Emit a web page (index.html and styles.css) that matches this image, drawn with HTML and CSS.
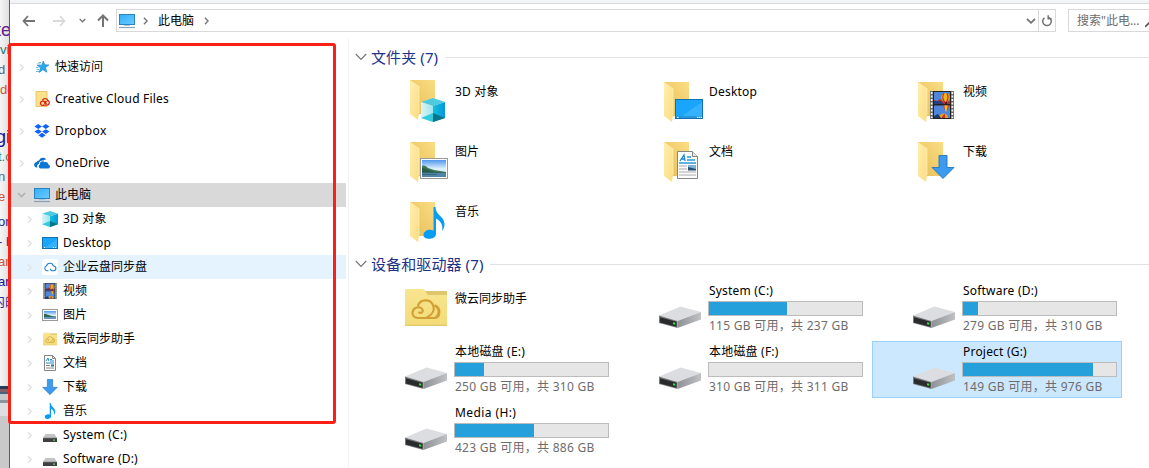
FILE: index.html
```html
<!DOCTYPE html>
<html lang="zh-CN">
<head>
<meta charset="utf-8">
<title>此电脑</title>
<link rel="stylesheet" href="styles.css">
</head>
<body>
<svg class="defs" width="0" height="0" aria-hidden="true">
  <defs>
    <linearGradient id="gFront" x1="0" y1="0" x2="1" y2="1"><stop offset="0" stop-color="#ffefad"/><stop offset="1" stop-color="#fbdc84"/></linearGradient>
    <linearGradient id="gBack" x1="0" y1="1" x2="1" y2="0"><stop offset="0" stop-color="#e5bd56"/><stop offset="1" stop-color="#fbdd84"/></linearGradient>
    <linearGradient id="gScreen" x1="0" y1="0" x2="1" y2="1"><stop offset="0" stop-color="#34aefc"/><stop offset="1" stop-color="#6bcaff"/></linearGradient>
    <linearGradient id="gDesk" x1="0" y1="0" x2="1" y2="1"><stop offset="0" stop-color="#1aa5fd"/><stop offset=".55" stop-color="#1aa5fd"/><stop offset=".56" stop-color="#35b2ff"/><stop offset="1" stop-color="#35b2ff"/></linearGradient>
    <linearGradient id="gCubeL" x1="0" y1="0" x2="1" y2="0"><stop offset="0" stop-color="#dcf5f7"/><stop offset="1" stop-color="#9ee4ee"/></linearGradient>
    <linearGradient id="gCubeR" x1="0" y1="0" x2="1" y2="0"><stop offset="0" stop-color="#12c0d8"/><stop offset="1" stop-color="#0596e0"/></linearGradient>
    <linearGradient id="gSky" x1="0" y1="0" x2="0" y2="1"><stop offset="0" stop-color="#4f97ee"/><stop offset=".5" stop-color="#dbeefb"/></linearGradient>
    <linearGradient id="gSide" x1="0" y1="0" x2="1" y2="0"><stop offset="0" stop-color="#8f9295"/><stop offset="1" stop-color="#bfc1c4"/></linearGradient>
    <linearGradient id="gWy" x1="0" y1="0" x2="0" y2="1"><stop offset="0" stop-color="#f8e58f"/><stop offset="1" stop-color="#f3db78"/></linearGradient>
  </defs>

  <symbol id="chev" viewBox="0 0 6 10"><path d="M1 1l4 4-4 4" fill="none" stroke="currentColor" stroke-width="1.7"/></symbol>
  <symbol id="down" viewBox="0 0 10 6"><path d="M1 .8l4 4 4-4" fill="none" stroke="currentColor" stroke-width="1.8"/></symbol>
  <symbol id="wide" viewBox="0 0 12 8"><path d="M.8 1l5.2 5.4L11.200 1" fill="none" stroke="currentColor" stroke-width="1.200"/></symbol>

  <symbol id="pc" viewBox="0 0 16 16"><rect x=".5" y="1.500" width="15" height="10" fill="url(#gScreen)" stroke="#2a83bd"/><path d="M5 12.500h6" stroke="#a7c8dd"/><path d="M0 14.500h16" stroke="#89a4b8" stroke-width="1.200"/></symbol>

  <symbol id="star" viewBox="0 0 16 16"><path d="M9.300 2l1.500 3.800 4 .1-3.200 2.700 1.200 4.600-3.900-2.500-3.700 2.700 1.300-4.600L3.300 6.500l4.400-.3z" fill="#2ca8e8" stroke="#1683c4" stroke-width=".6"/><path d="M4.500 3.500H7M3 5h3.500M2 8.500h2.500M2.500 10.500h2.500M2 12.500h3" stroke="#49a8dc" stroke-width=".8"/></symbol>

  <symbol id="cc" viewBox="0 0 16 16"><path d="M2 .5h11v15H2z" fill="#fce28a" stroke="#e7bd55" stroke-width=".8"/><path d="M10.500 13.700c-1 1.200-4 1-4-1.400 0-2.500 3-2.800 4.200-1.300l1.600 2M8.500 9.300c1-2.400 5-2 5.200.2 2.400.6 2 4.600-.8 4.600H9.500M11 12.500c-1-1.200.5-2.500 1.600-1.600" fill="none" stroke="#dc231b" stroke-width="1.350"/></symbol>

  <symbol id="dropbox" viewBox="0 0 16 16"><path d="M4.200 1l3.700 2.400-3.700 2.500L.5 3.400zM11.800 1l3.700 2.400-3.700 2.500-3.700-2.500zM4.200 6.200l3.700 2.400-3.700 2.500L.5 8.600zM11.800 6.200l3.700 2.400-3.700 2.500-3.700-2.500zM8 9.800l3.600 2.400L8 14.700l-3.600-2.500z" fill="#0d63fb"/></symbol>

  <symbol id="onedrive" viewBox="0 0 16 16"><path d="M3.500 12.500H2.700C-.6 12.200-.6 7.700 2.300 7.200A3 3 0 0 1 5 5.400a4.300 4.300 0 0 1 7.500-.9 3.600 3.600 0 0 0-3.300 1.200C6.800 5.200 5 7 4.800 8.900c-1.600.3-2.100 1.800-1.300 3.600z" fill="#0a6fc9"/><path d="M6.600 13.500a2.200 2.200 0 0 1-.8-4.100c0-3 3.100-4.300 4.900-2.100 1.800-.8 3.600.3 3.600 2.200 2.300.3 2.200 3.900 0 4z" fill="#0a78d4"/></symbol>

  <symbol id="cube" viewBox="0 0 24 24"><path d="M0 4l12-4 12 4-12 4z" fill="#4ccbe0"/><path d="M0 4l12 4v16L0 20z" fill="url(#gCubeL)"/><path d="M24 4L12 8v16l12-4z" fill="url(#gCubeR)"/><path d="M0 20l12-5v9z" fill="#34cbdc"/><path d="M12 15l12 5-12 4z" fill="#07758a"/></symbol>

  <symbol id="desk" viewBox="0 0 28 20"><rect x=".5" y=".5" width="27" height="19" fill="url(#gDesk)" stroke="#1170b3"/><path d="M1 18h26" stroke="#1580c5"/><path d="M2 18.300h1.500M22 18.300h1.300M24 18.300h1.300M26 18.300h1" stroke="#fff" stroke-width="1.200"/></symbol>
  <symbol id="desk-sm" viewBox="0 0 16 16"><rect x=".5" y="2.500" width="15" height="11" fill="url(#gDesk)" stroke="#1170b3"/><path d="M2 12.500h1M11 12.500h1M13 12.500h1" stroke="#fff"/></symbol>

  <symbol id="sync" viewBox="0 0 16 16"><rect width="16" height="16" rx="2" fill="#fff"/><path d="M6.500 11.800H5a2.600 2.600 0 0 1-.5-5A3.600 3.600 0 0 1 11.400 7a2.400 2.400 0 0 1 .2 4.800H9.500M8 10l1.800 1.800" fill="none" stroke="#1b80d5" stroke-width="1.100"/></symbol>

  <symbol id="film" viewBox="0 0 24 28"><path d="M0 0h24v28H0z" fill="#6b6b6b"/><path d="M1.700 1v26M22.300 1v26" stroke="#f4f4f4" stroke-width="1.700" stroke-dasharray="2 1.500"/><path d="M3 0h18v28H3z" fill="#222"/><path d="M4 1h16v12H4zM4 14.500h16V27H4z" fill="#4e86de"/><path d="M4 9l3 1 3-2 4 3 6-1v3H4z" fill="#b5322c"/><path d="M4 10h7l3 3H4z" fill="#2c3d7d"/><ellipse cx="15.500" cy="6.500" rx="4.200" ry="4.500" fill="#f0b41e"/><path d="M14 2.200c-2 3-1.500 7 1 9M17 2.200c1.500 3 1.200 7-.8 9" fill="none" stroke="#c93227" stroke-width="1.300"/><path d="M15 11h2v2h-2z" fill="#422"/><path d="M12.500 14.500h7l-2 4.500h-2.500z" fill="#d9442c"/><path d="M14.500 14.500h3l-1 6h-1z" fill="#f3c222"/><path d="M9 27c0-6 9-6 9 0z" fill="#e8a11d"/><path d="M12 27c0-3 3-4 3-4v4z" fill="#c2342a"/><path d="M4 25l4-2 3 4H4z" fill="#20386e"/></symbol>

  <symbol id="pic" viewBox="0 0 28 21"><rect x=".5" y=".5" width="27" height="20" fill="#fff" stroke="#999"/><path d="M2 2h24v17H2z" fill="url(#gSky)"/><path d="M2 8c2-1 4 0 6 2l6 2 12 2v2H2z" fill="#3f7553"/><path d="M2 10c4 0 8 3 14 4l10 .5V16H2z" fill="#285d4c"/><path d="M2 14.800h24V19H2z" fill="#5185a8"/><path d="M2 16.500h15" stroke="#37667f"/></symbol>
  <symbol id="pic-sm" viewBox="0 0 16 16"><rect x=".5" y="2.500" width="15" height="11" fill="#fff" stroke="#999"/><path d="M2 4h12v8H2z" fill="url(#gSky)"/><path d="M2 7c4 0 5 2 12 2.500V11H2z" fill="#2f6852"/><path d="M2 10h12v2H2z" fill="#6497bb"/></symbol>

  <symbol id="wy" viewBox="0 0 42 37"><path d="M0 1.500Q0 0 1.500 0H18l2.500 2H42v33.500q0 1.500-1.500 1.500h-39Q0 37 0 35.500z" fill="url(#gWy)"/><path d="M20 2h22v4H23z" fill="#dfc56d"/><path d="M0 36.300h42" stroke="#d6bd62" stroke-width=".8"/><path d="M14 23.500c3 1.300 5-1.800 2.700-4-3-2.600-9-.6-9.200 4.200-.2 3.200 2.300 5.300 5.300 5.300h16c7 0 7.500-9.500 1.500-12.500M13 16.500c2.500-6.500 12-7 15-.5 2 5-.5 9.500-6 12.500M30.500 17c4.500 2.500 3.500 9 .5 11" fill="none" stroke="#d2a136" stroke-width="2.100" stroke-linecap="round"/></symbol>

  <symbol id="doc" viewBox="0 0 21 28"><path d="M.5.5h15l5 5v22H.5z" fill="#fdfdfd" stroke="#858585"/><path d="M15.500.5v5h5" fill="#e5e5e5" stroke="#858585"/><path d="M3 10l4-6 1 6M4.500 8H8" fill="none" stroke="#1b86c8" stroke-width="1.300"/><path d="M10 6h4M10 9h8M2 12h17" stroke="#2e98d6" stroke-width="1.300"/><path d="M2 15h8M2 18h8M2 21h17M2 24h17" stroke="#aaa"/><path d="M11 14h8v5h-8z" fill="#7fb1da"/><path d="M11 16l8 2v1.500h-8z" fill="#274f70"/></symbol>
  <symbol id="doc-sm" viewBox="0 0 16 16"><path d="M2.500.5h8l3 3v12h-11z" fill="#fff" stroke="#858585"/><path d="M10.500.5v3h3" fill="none" stroke="#858585"/><path d="M4 6l2-3 .8 3M8 4.500h2M8 6h4M4 8h8" fill="none" stroke="#2389cb"/><path d="M4 10.500h4M4 13h8" stroke="#888"/><path d="M9 9.500h3v2H9z" fill="#356c94"/></symbol>

  <symbol id="arrow" viewBox="0 0 24 24"><path d="M8 .5h8v12h7L12 23.500 1 12.500h7z" fill="#3c9bee" stroke="#2574bd" stroke-width=".9"/></symbol>
  <symbol id="note" viewBox="0 0 22 32"><path d="M10.500 0h2c0 8 9 9.500 9 17 0 3-1 5-2.500 7 1-5 0-9-6-12.500V27c0 6-12.500 6.500-12.500 1 0-4.500 6-6.500 10-4.500z" fill="#069df7"/></symbol>

  <symbol id="drive" viewBox="0 0 42 23"><path d="M0 9.500L21.500.5 42 6 18.500 15z" fill="#dcdde0"/><path d="M0 9.500L18.500 15v7L0 17z" fill="#77797c"/><path d="M1 11.200l16.500 4.600v5L1 16.500z" fill="#292b2c"/><path d="M18.500 15L42 6v7.500L18.500 22z" fill="url(#gSide)"/><path d="M14 16.200l2.300.5v2l-2.300-.5z" fill="#38e33e"/></symbol>
  <symbol id="drive-sm" viewBox="0 0 16 16"><path d="M3.500 7h9L15 11H1z" fill="#c3c4c6"/><path d="M1 11h14v4H1z" fill="#3d3f40"/><path d="M1 11h14" stroke="#808285" stroke-width=".7"/><path d="M11 12.500h2v1.200h-2z" fill="#42e048"/></symbol>

  <symbol id="folder" viewBox="0 0 27 42"><path d="M0 1h25v34H0z" fill="url(#gBack)"/><path d="M0 1l9 6v27l-1 7-8-6z" fill="url(#gFront)"/><path d="M9 7v27" stroke="#fff0bb" stroke-width=".7"/></symbol>
</svg>

<div class="screen">
  <div class="behind" aria-hidden="true">
    <p class="ln big purple first in5">te</p>
    <p class="ln teal">vi</p>
    <p class="ln slate in2">d</p>
    <p class="ln rust">do</p>
    <p class="ln big navy gap-a in5">gic</p>
    <p class="ln green in2">t.c</p>
    <p class="ln slate in2">n</p>
    <p class="ln rust in2">e</p>
    <p class="ln blue gap-b in2">or</p>
    <p class="ln indigo in2">- h</p>
    <p class="ln rust in2">an</p>
    <p class="ln navy in2">ar</p>
    <p class="ln blue in8">内的</p>
    <div class="thumb"></div>
  </div>

  <div class="window">
    <div class="ribbon"></div>
    <div class="toolbar">
      <svg class="nav back" viewBox="0 0 14 12"><path d="M6 1L1.500 6 6 11M1.500 6H13" /></svg>
      <svg class="nav fwd" viewBox="0 0 14 12"><path d="M8 1l4.500 5L8 11M12.500 6H1" /></svg>
      <svg class="recent"><use href="#down"/></svg>
      <svg class="nav up" viewBox="0 0 12 14"><path d="M1 6.500l5-5 5 5M6 1.500V13" /></svg>
      <div class="address">
        <svg class="i16"><use href="#pc"/></svg>
        <svg class="crumb"><use href="#chev"/></svg>
        <span class="place">此电脑</span>
        <svg class="crumb"><use href="#chev"/></svg>
        <svg class="history"><use href="#down"/></svg>
        <span class="refresh"><svg viewBox="0 0 12 12"><path d="M4 2.500A4.300 4.300 0 1 0 8.500 2.800M4.800.3v3.500H1.300" /></svg></span>
      </div>
      <div class="search"><span>搜索"此电...</span><svg viewBox="0 0 8 12"><path d="M0 10l7-7" /></svg></div>
    </div>

    <div class="body">
      <nav class="tree">
        <div class="row root"><svg class="tw"><use href="#chev"/></svg><svg class="i16"><use href="#star"/></svg><span>快速访问</span></div>
        <div class="row root"><svg class="tw"><use href="#chev"/></svg><svg class="i16"><use href="#cc"/></svg><span class="lat">Creative Cloud Files</span></div>
        <div class="row root"><svg class="tw"><use href="#chev"/></svg><svg class="i16"><use href="#dropbox"/></svg><span class="lat wider">Dropbox</span></div>
        <div class="row root"><svg class="tw"><use href="#chev"/></svg><svg class="i16"><use href="#onedrive"/></svg><span class="lat">OneDrive</span></div>
        <div class="row root current"><svg class="tw open"><use href="#down"/></svg><svg class="i16"><use href="#pc"/></svg><span>此电脑</span></div>
        <div class="row"><svg class="tw"><use href="#chev"/></svg><svg class="i16"><use href="#cube"/></svg><span class="lat">3D 对象</span></div>
        <div class="row"><svg class="tw"><use href="#chev"/></svg><svg class="i16"><use href="#desk-sm"/></svg><span class="lat">Desktop</span></div>
        <div class="row hover"><svg class="tw"><use href="#chev"/></svg><svg class="i16"><use href="#sync"/></svg><span>企业云盘同步盘</span></div>
        <div class="row"><svg class="tw"><use href="#chev"/></svg><svg class="i16"><use href="#film"/></svg><span>视频</span></div>
        <div class="row"><svg class="tw"><use href="#chev"/></svg><svg class="i16"><use href="#pic-sm"/></svg><span>图片</span></div>
        <div class="row"><svg class="tw"><use href="#chev"/></svg><svg class="i16 inset"><use href="#wy"/></svg><span>微云同步助手</span></div>
        <div class="row"><svg class="tw"><use href="#chev"/></svg><svg class="i16"><use href="#doc-sm"/></svg><span>文档</span></div>
        <div class="row"><svg class="tw"><use href="#chev"/></svg><svg class="i16"><use href="#arrow"/></svg><span>下载</span></div>
        <div class="row"><svg class="tw"><use href="#chev"/></svg><svg class="i16"><use href="#note"/></svg><span>音乐</span></div>
        <div class="row"><svg class="tw"><use href="#chev"/></svg><svg class="i16"><use href="#drive-sm"/></svg><span class="lat">System (C:)</span></div>
        <div class="row"><svg class="tw"><use href="#chev"/></svg><svg class="i16"><use href="#drive-sm"/></svg><span class="lat">Software (D:)</span></div>
      </nav>

      <main class="content">
        <h2 class="group"><svg><use href="#wide"/></svg><span>文件夹 (7)</span></h2>
        <div class="tiles folders">
          <div class="tile"><div class="pict"><svg class="folder raised"><use href="#folder"/></svg><svg class="badge b-cube"><use href="#cube"/></svg></div><span class="lat">3D 对象</span></div>
          <div class="tile"><div class="pict"><svg class="folder"><use href="#folder"/></svg><svg class="badge b-desk"><use href="#desk"/></svg></div><span class="lat">Desktop</span></div>
          <div class="tile"><div class="pict"><svg class="folder"><use href="#folder"/></svg><svg class="badge b-film"><use href="#film"/></svg></div><span>视频</span></div>
          <div class="tile"><div class="pict"><svg class="folder"><use href="#folder"/></svg><svg class="badge b-pic"><use href="#pic"/></svg></div><span>图片</span></div>
          <div class="tile"><div class="pict"><svg class="folder"><use href="#folder"/></svg><svg class="badge b-doc"><use href="#doc"/></svg></div><span>文档</span></div>
          <div class="tile"><div class="pict"><svg class="folder"><use href="#folder"/></svg><svg class="badge b-arrow"><use href="#arrow"/></svg></div><span>下载</span></div>
          <div class="tile"><div class="pict"><svg class="folder"><use href="#folder"/></svg><svg class="badge b-note"><use href="#note"/></svg></div><span>音乐</span></div>
        </div>

        <h2 class="group"><svg><use href="#wide"/></svg><span>设备和驱动器 (7)</span></h2>
        <div class="tiles drives">
          <div class="tile"><svg class="wy"><use href="#wy"/></svg><div class="info lone">微云同步助手</div></div>
          <div class="tile"><svg class="drive"><use href="#drive"/></svg><div class="info"><div class="lat">System (C:)</div><div class="bar"><i style="width:51%"></i></div><div class="free">115 GB 可用，共 237 GB</div></div></div>
          <div class="tile"><svg class="drive"><use href="#drive"/></svg><div class="info"><div class="lat">Software (D:)</div><div class="bar"><i style="width:10%"></i></div><div class="free">279 GB 可用，共 310 GB</div></div></div>
          <div class="tile"><svg class="drive"><use href="#drive"/></svg><div class="info"><div class="lat">本地磁盘 (E:)</div><div class="bar"><i style="width:19%"></i></div><div class="free">250 GB 可用，共 310 GB</div></div></div>
          <div class="tile"><svg class="drive"><use href="#drive"/></svg><div class="info"><div class="lat">本地磁盘 (F:)</div><div class="bar"><i style="width:0"></i></div><div class="free">310 GB 可用，共 311 GB</div></div></div>
          <div class="tile selected"><svg class="drive"><use href="#drive"/></svg><div class="info"><div class="lat">Project (G:)</div><div class="bar"><i style="width:85%"></i></div><div class="free">149 GB 可用，共 976 GB</div></div></div>
          <div class="tile"><svg class="drive"><use href="#drive"/></svg><div class="info"><div class="lat wider">Media (H:)</div><div class="bar"><i style="width:51.500%"></i></div><div class="free">423 GB 可用，共 886 GB</div></div></div>
        </div>
      </main>
    </div>
  </div>
  <div class="callout"></div>
</div>
</body>
</html>
```

FILE: styles.css
```css
* { box-sizing: border-box; }
body {
  margin: 0;
  overflow: hidden;
  background: #fff;
  color: #000;
  font: 12px/16px "Noto Sans", "Noto Sans CJK SC", sans-serif;
}
svg { display: block; flex: none; }
.defs { position: absolute; }
.screen { position: relative; display: flex; width: 1149px; height: 468px; overflow: hidden; }
.lat { letter-spacing: .2px; }
.lat.wider { letter-spacing: .4px; }

/* page visible behind the window */
.behind {
  width: 9px;
  flex: none;
  overflow: hidden;
  background: linear-gradient(90deg, #f5f5f5, #e0e0e0);
  font: 13px/20px "Liberation Sans", "Noto Sans CJK SC", sans-serif;
}
.ln { margin: 0; height: 20px; white-space: nowrap; }
.in2 { text-indent: -2px; }
.in5 { text-indent: -4px; }
.in8 { text-indent: -8px; }
.big { font-size: 18px; }
.first { margin-top: 20px; }
.gap-a { margin-top: 27px; }
.gap-b { margin-top: 5px; }
.purple { color: #62208f; }
.teal { color: #16787a; }
.slate { color: #53628a; }
.rust { color: #cd5137; }
.navy { color: #1a0d9c; }
.green { color: #398074; }
.blue { color: #252e9b; }
.indigo { color: #4c238f; }
.thumb { height: 156px; margin-top: 74px; background: linear-gradient(#263c58 0 3px, #815e68 3px 6px, #47607b 6px 8px, #c4c8d1 8px 14px, #8d939c 14px 17px, #dcdee2 17px 30px, #c9c9c9 30px); }

.window { flex: 1; min-width: 0; display: flex; flex-direction: column; border-left: 1px solid #236f9d; }
.ribbon { height: 4px; flex: none; background: #f3f4f8; border-bottom: 1px solid #d8dade; }
.toolbar { display: flex; align-items: center; height: 35px; flex: none; padding: 0 0 2px 12px; color: #747474; }
.nav { fill: none; stroke: #737373; stroke-width: 1.8; }
.back, .fwd { width: 14px; height: 12px; }
.fwd { margin-left: 16px; stroke: #d9d9d9; }
.recent { width: 7px; height: 5px; margin-left: 13px; }
.up { width: 12px; height: 14px; margin-left: 11px; stroke-width: 2; }
.address { display: flex; align-items: center; width: 940px; height: 23px; margin-left: 7px; padding-left: 2px; border: 1px solid #d9d9d9; }
.crumb { width: 5px; height: 8px; margin-left: 8px; }
.place { margin-left: 10px; color: #000; }
.place + .crumb { margin-left: 10px; }
.history { width: 10px; height: 6px; margin: 1px 2px 0 auto; }
.refresh { align-self: stretch; width: 17px; display: flex; align-items: center; justify-content: center; border-left: 1px solid #d9d9d9; }
.refresh svg { width: 12px; height: 12px; fill: none; stroke: #747474; stroke-width: 1.5; transform: scaleX(-1); }
.search { flex: 1; height: 23px; margin-left: 12px; padding-left: 8px; display: flex; align-items: center; border: 1px solid #d9d9d9; border-right: 0; color: #6d6d6d; white-space: nowrap; overflow: hidden; }
.search svg { width: 8px; height: 12px; margin: 4px 0 0 5px; fill: none; stroke: #555; stroke-width: 1.6; }

.body { flex: 1; display: flex; min-height: 0; }
.i16 { width: 16px; height: 16px; }
.i16.inset { padding: 1px; }

/* navigation tree */
.tree { width: 339px; flex: none; padding: 16px 2px 0 0; border-right: 1px solid #f2f2f2; }
.row { display: flex; align-items: center; height: 24px; padding-left: 17px; white-space: nowrap; }
.row.root { padding-left: 9px; margin-bottom: 8px; }
.row.root.current { margin-bottom: 0; background: #d9d9d9; }
.row.hover { background: #e5f3ff; }
.row span { margin-left: 5px; }
.tw { width: 5px; height: 9px; margin-right: 10px; color: #e2e2e2; }
.tw.open { width: 9px; height: 6px; margin: 0 8px 0 -2px; color: #b0b0b0; }

/* main pane */
.content { flex: 1; min-width: 0; padding: 8px 0 0 6px; }
.group { display: flex; align-items: center; height: 20px; margin: 0; font-size: 15px; font-weight: 400; color: #1e3287; letter-spacing: .1px; white-space: nowrap; }
.group svg { width: 12px; height: 8px; margin-right: 4px; color: #767676; }
.group::after { content: ""; flex: 1; height: 1px; margin-left: 7px; background: #e1e1e1; }
.tiles { display: grid; grid-template-columns: repeat(3, 250px); column-gap: 4px; padding-left: 9px; }
.folders { grid-auto-rows: 60px; padding-top: 7px; }
.folders .tile { display: flex; padding: 10px 0 0 46px; }
.folders .tile > span { margin-left: 8px; }
.pict { position: relative; width: 37px; height: 42px; }
.folder { width: 27px; height: 42px; margin-top: -3px; }
.folder.raised { margin-top: -5px; }
.badge { position: absolute; }
.b-cube { width: 24px; height: 24px; left: 11px; top: 14px; }
.b-desk { width: 28px; height: 20px; left: 11px; top: 15px; }
.b-film { width: 24px; height: 28px; left: 12px; top: 7px; }
.b-pic { width: 28px; height: 21px; left: 10px; top: 14px; }
.b-doc { width: 21px; height: 28px; left: 13px; top: 7px; }
.b-arrow { width: 24px; height: 24px; left: 13px; top: 11px; }
.b-note { width: 22px; height: 32px; left: 13px; top: 3px; }

.drives { grid-auto-rows: 57px; row-gap: 4px; padding-top: 6px; }
.drives .tile { display: flex; border: 1px solid transparent; padding: 1px 0 0 40px; }
.drives .selected { background: #cce8ff; border-color: #99d1ff; }
.drive { width: 42px; height: 23px; margin-top: 24px; }
.wy { width: 42px; height: 37px; margin-top: 7px; }
.info { width: 155px; margin-left: 7px; white-space: nowrap; }
.info > div:not(.bar) { padding-left: 1px; }
.info > div:first-child { height: 19px; line-height: 17px; }
.info.lone { padding: 9px 0 0 1px; }
.bar { height: 15px; background: #e6e6e6; border: 1px solid #bcbcbc; }
.bar i { display: block; height: 100%; background: #26a0da; }
.info .free { color: #6d6d6d; line-height: 20px; letter-spacing: .2px; word-spacing: .3px; }

.callout { position: absolute; left: 8px; top: 43px; width: 328px; height: 381px; border: 3px solid #fa2015; border-radius: 3px; pointer-events: none; }
```
